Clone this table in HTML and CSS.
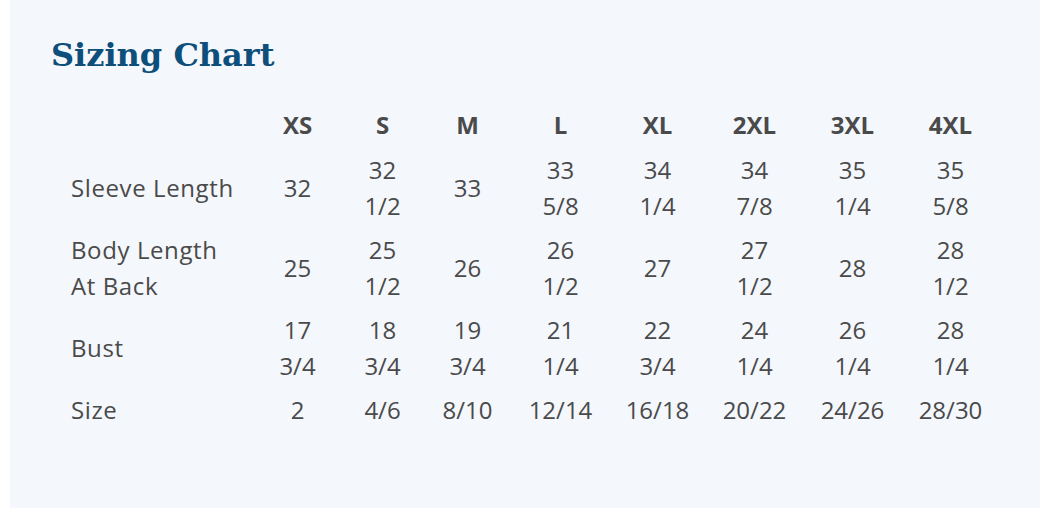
FILE: index.html
```html
<!DOCTYPE html>
<html>
<head>
<meta charset="utf-8">
<link rel="stylesheet" href="styles.css">
</head>
<body>
<section class="panel">
  <h2 class="title">Sizing Chart</h2>
  <table class="chart">
    <thead>
      <tr>
        <th class="label"></th>
        <th>XS</th><th>S</th><th>M</th><th>L</th><th>XL</th><th>2XL</th><th>3XL</th><th>4XL</th>
      </tr>
    </thead>
    <tbody>
      <tr>
        <td class="label">Sleeve Length</td>
        <td>32</td><td>32<br>1/2</td><td>33</td><td>33<br>5/8</td><td>34<br>1/4</td><td>34<br>7/8</td><td>35<br>1/4</td><td>35<br>5/8</td>
      </tr>
      <tr>
        <td class="label">Body Length<br>At Back</td>
        <td>25</td><td>25<br>1/2</td><td>26</td><td>26<br>1/2</td><td>27</td><td>27<br>1/2</td><td>28</td><td>28<br>1/2</td>
      </tr>
      <tr>
        <td class="label">Bust</td>
        <td>17<br>3/4</td><td>18<br>3/4</td><td>19<br>3/4</td><td>21<br>1/4</td><td>22<br>3/4</td><td>24<br>1/4</td><td>26<br>1/4</td><td>28<br>1/4</td>
      </tr>
      <tr>
        <td class="label">Size</td>
        <td>2</td><td>4/6</td><td>8/10</td><td>12/14</td><td>16/18</td><td>20/22</td><td>24/26</td><td>28/30</td>
      </tr>
    </tbody>
  </table>
</section>
</body>
</html>
```
FILE: styles.css
```css
html, body {
  margin: 0;
  padding: 0;
  background: #ffffff;
}
body {
  padding: 0 23px 4px 10px;
}
.panel {
  background: #f4f7fc;
  height: 508px;
  box-sizing: border-box;
  padding: 34px 20px 0 41px;
}
.title {
  margin: 0;
  font-family: "DejaVu Serif", serif;
  font-weight: bold;
  font-size: 32px;
  line-height: 42px;
  color: #0d4e7a;
}
.chart {
  margin: 27px 0 0 20px;
  border-collapse: collapse;
  font-family: "Open Sans", "Noto Sans", sans-serif;
  font-size: 24px;
  line-height: 36px;
  color: #4a4a4a;
}
.chart th, .chart td {
  padding: 4px 0;
  text-align: center;
  vertical-align: middle;
  width: 85px;
}
.chart tbody td {
  padding-top: 5px;
  padding-bottom: 3px;
}
.chart th {
  font-weight: 700;
}
.chart .label {
  text-align: left;
  width: 184px;
  letter-spacing: 0.6px;
}
.chart tr > :nth-child(5) { width: 101px; }
.chart tr > :nth-child(6) { width: 93px; }
.chart tr > :nth-child(7) { width: 101px; }
.chart tr > :nth-child(8) { width: 95px; }
.chart tr > :nth-child(9) { width: 101px; }
```
